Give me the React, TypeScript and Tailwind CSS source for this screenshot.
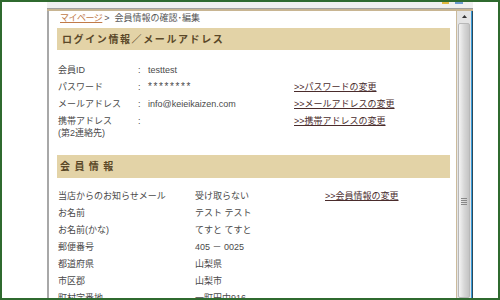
import React from "react";

const jp = { fontFamily: '"Liberation Sans", "Noto Sans CJK JP", sans-serif' } as React.CSSProperties;

function Row1({ label, value, link, tall, valueClass }: { label: React.ReactNode; value?: string; link?: string; tall?: boolean; valueClass?: string }) {
  return (
    <div className={`flex items-start ${tall ? "h-[30px]" : "h-[17px]"} text-[9px] leading-[12px] text-[#4a4a4a]`}>
      <div className="w-[80px] shrink-0">{label}</div>
      <div className="w-[10px] shrink-0">:</div>
      <div className={`w-[146px] shrink-0 ${valueClass ?? ""}`}>{value}</div>
      {link && <a className="text-[#4a2c2c] underline">{link}</a>}
    </div>
  );
}

function Row2({ label, value, link }: { label: string; value: string; link?: string }) {
  return (
    <div className="flex items-start h-[17px] text-[9px] leading-[12px] text-[#4a4a4a]">
      <div className="w-[137px] shrink-0">{label}</div>
      <div className="w-[130px] shrink-0">{value}</div>
      {link && <a className="text-[#4a2c2c] underline">{link}</a>}
    </div>
  );
}

export default function App() {
  return (
    <div style={jp} className="w-[500px] h-[300px] overflow-hidden border-2 border-[#2f6a2f] flex bg-white">
      <div className="w-[45px] shrink-0 bg-white" />
      <div className="w-[426px] shrink-0 flex flex-col">
        <div className="h-[7px] shrink-0 bg-[#f0f0f0] border-b border-[#a0a0a0] flex justify-end items-start pr-[10px] gap-[6px]">
          <div className="w-[7px] h-[2px] bg-[#e0b840]" />
          <div className="w-[8px] h-[2px] bg-[#6b9bd0]" />
        </div>
        <div className="h-[2px] shrink-0 bg-[#c8b592]" />
        <div className="flex-1 flex min-h-0">
          <div className="w-[3px] shrink-0 border-l-2 border-[#a8a8a8] bg-white" />
          <div className="flex-1 min-w-0 pl-[8px] pr-[6px]">
            <div className="h-[17px] pt-[1px] text-[9px] leading-[12px] text-[#555] flex items-start">
              <a className="text-[#c07a48] underline ml-[2px] tracking-[-0.5px]">マイページ</a>
              <span className="ml-[2px]">&gt;</span>
              <span className="ml-[5px]">会員情報の確認･編集</span>
            </div>
            <div className="h-[22px] bg-[#e3d3a7] -ml-[1px] flex items-center pl-[5px] text-[10px] font-bold tracking-[1.6px] text-[#5a4828]">
              ログイン情報／メールアドレス
            </div>
            <div className="mt-[14px]">
              <Row1 label="会員ID" value="testtest" />
              <Row1 label="パスワード" value="********" valueClass="tracking-[1.6px] text-[10px]" link=">>パスワードの変更" />
              <Row1 label="メールアドレス" value="info@keieikaizen.com" link=">>メールアドレスの変更" />
              <Row1 label={<><div>携帯アドレス</div><div>(第2連絡先)</div></>} link=">>携帯アドレスの変更" tall />
            </div>
            <div className="mt-[10px] h-[23px] bg-[#e3d3a7] -ml-[1px] flex items-center pl-[3px] text-[10px] font-bold tracking-[0.8px] text-[#5a4828]">
              会 員 情 報
            </div>
            <div className="mt-[12px]">
              <Row2 label="当店からのお知らせメール" value="受け取らない" link=">>会員情報の変更" />
              <Row2 label="お名前" value="テスト テスト" />
              <Row2 label="お名前(かな)" value="てすと てすと" />
              <Row2 label="郵便番号" value="405 － 0025" />
              <Row2 label="都道府県" value="山梨県" />
              <Row2 label="市区郡" value="山梨市" />
              <Row2 label="町村字番地" value="一町田中916" />
            </div>
          </div>
          <div className="w-[15px] shrink-0 border-l border-[#cbbb9c] bg-[#e4e4e4] flex flex-col items-center">
            <div className="h-[11px] w-full flex items-center justify-center">
              <svg width="5" height="3" viewBox="0 0 5 3"><path d="M0 3 L2.5 0 L5 3 Z" fill="#333" /></svg>
            </div>
            <div className="flex-1 w-[12px] mt-[1px] bg-gradient-to-r from-[#f4f4f4] via-[#d8d8d8] to-[#c4c4c4] border border-[#b8b8b8] rounded-[2px] flex flex-col items-center pt-[174px]">
              <div className="w-[6px] h-[7px] flex flex-col justify-between">
                <div className="h-px bg-[#888]" />
                <div className="h-px bg-[#888]" />
                <div className="h-px bg-[#888]" />
                <div className="h-px bg-[#888]" />
              </div>
            </div>
          </div>
          <div className="w-[1px] shrink-0 bg-[#3a9ad8]" />
          <div className="w-[1px] shrink-0 bg-[#2a4a5a]" />
        </div>
      </div>
      <div className="flex-1 bg-white" />
    </div>
  );
}
